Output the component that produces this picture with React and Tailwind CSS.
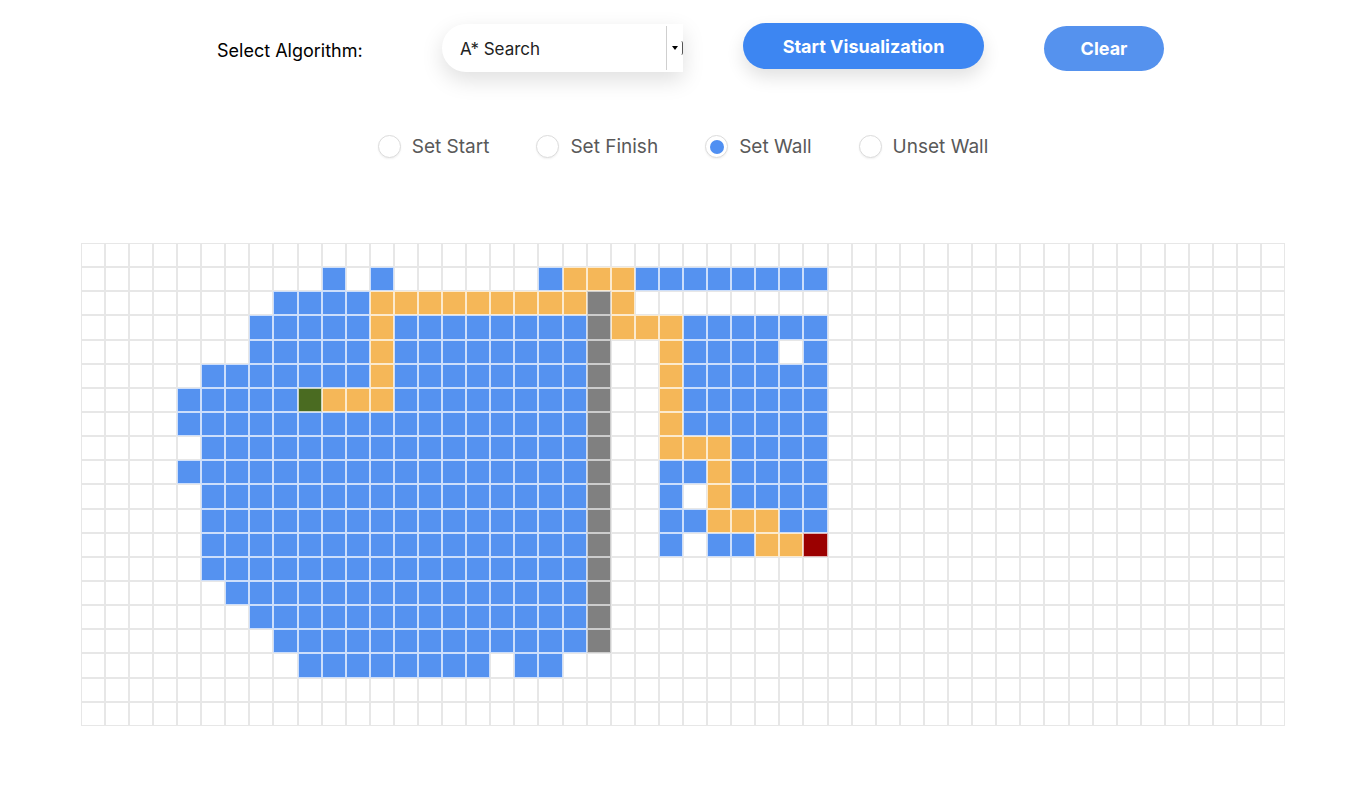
import React, { useState } from "react";

const ROWS = 20;
const COLS = 50;

// row -> list of [type, from, to]
const PAINT = {
  1: [["B", 10, 10], ["B", 12, 12], ["B", 19, 19], ["O", 20, 22], ["B", 23, 30]],
  2: [["B", 8, 11], ["O", 12, 20], ["W", 21, 21], ["O", 22, 22]],
  3: [["B", 7, 11], ["O", 12, 12], ["B", 13, 20], ["W", 21, 21], ["O", 22, 24], ["B", 25, 30]],
  4: [["B", 7, 11], ["O", 12, 12], ["B", 13, 20], ["W", 21, 21], ["O", 24, 24], ["B", 25, 28], ["B", 30, 30]],
  5: [["B", 5, 11], ["O", 12, 12], ["B", 13, 20], ["W", 21, 21], ["O", 24, 24], ["B", 25, 30]],
  6: [["B", 4, 8], ["S", 9, 9], ["O", 10, 12], ["B", 13, 20], ["W", 21, 21], ["O", 24, 24], ["B", 25, 30]],
  7: [["B", 4, 20], ["W", 21, 21], ["O", 24, 24], ["B", 25, 30]],
  8: [["B", 5, 20], ["W", 21, 21], ["O", 24, 26], ["B", 27, 30]],
  9: [["B", 4, 20], ["W", 21, 21], ["B", 24, 25], ["O", 26, 26], ["B", 27, 30]],
  10: [["B", 5, 20], ["W", 21, 21], ["B", 24, 24], ["O", 26, 26], ["B", 27, 30]],
  11: [["B", 5, 20], ["W", 21, 21], ["B", 24, 25], ["O", 26, 28], ["B", 29, 30]],
  12: [["B", 5, 20], ["W", 21, 21], ["B", 24, 24], ["B", 26, 27], ["O", 28, 29], ["F", 30, 30]],
  13: [["B", 5, 20], ["W", 21, 21]],
  14: [["B", 6, 20], ["W", 21, 21]],
  15: [["B", 7, 20], ["W", 21, 21]],
  16: [["B", 8, 20], ["W", 21, 21]],
  17: [["B", 9, 16], ["B", 18, 19]],
};

const CELL_CLASS = {
  E: "bg-white border-[#e7e7e7]",
  B: "bg-[#5592f0] border-white/70",
  O: "bg-[#f5b758] border-white/70",
  W: "bg-[#808080] border-white/60",
  S: "bg-[#4a6b21] border-white/70",
  F: "bg-[#9b0000] border-white/70",
};

const buildGrid = () => {
  const grid = [];
  for (let r = 0; r < ROWS; r++) {
    const row = new Array(COLS).fill("E");
    (PAINT[r] || []).forEach(([type, from, to]) => {
      for (let c = from; c <= to; c++) row[c] = type;
    });
    grid.push(row);
  }
  return grid;
};

const MODES = ["Set Start", "Set Finish", "Set Wall", "Unset Wall"];

const Radio = ({ label, checked, onSelect }) => (
  <label
    onClick={onSelect}
    className="flex cursor-pointer items-center gap-[11px]"
  >
    <span className="flex h-[23px] w-[23px] items-center justify-center rounded-full border border-[#dcdcdc] bg-white shadow-[0_1px_2px_rgba(0,0,0,0.06)]">
      {checked && <span className="h-[14px] w-[14px] rounded-full bg-[#4f8ff2]" />}
    </span>
    <span className="text-[19px] leading-none text-[#595959]">{label}</span>
  </label>
);

const App = () => {
  const [mode, setMode] = useState("Set Wall");
  const grid = buildGrid();

  return (
    <div className="min-h-screen bg-white font-['Inter','Liberation_Sans',sans-serif]">
      <div className="flex items-center justify-center pl-[15px] pt-[24px]">
        <span className="mt-[4px] w-[150px] whitespace-nowrap text-[18px] text-black">
          Select Algorithm:
        </span>

        <div className="ml-[75px] flex h-[48px] w-[241px] items-center rounded-l-full bg-white shadow-[0_8px_22px_rgba(0,0,0,0.13)]">
          <span className="flex-1 pl-[18px] pt-[3px] text-[17px] text-[#222]">A* Search</span>
          <div className="flex h-[44px] w-[17px] items-center border-l border-[#cfcfcf] pl-[5px]">
            <span className="h-0 w-0 border-x-[3px] border-t-[4px] border-x-transparent border-t-black" />
            <span className="ml-[3px] h-[14px] w-[3px] rounded-r-full border-r border-[#555]" />
          </div>
        </div>

        <button className="-mt-[4px] ml-[60px] h-[46px] w-[241px] rounded-full bg-[#3d86f2] text-[18px] font-bold text-white shadow-[0_8px_18px_rgba(0,0,0,0.12)]">
          Start Visualization
        </button>

        <button className="ml-[60px] mt-[1px] h-[45px] w-[120px] rounded-full bg-[#5592ee] text-[18px] font-bold text-white">
          Clear
        </button>
      </div>

      <div className="mt-[63px] flex items-center justify-center gap-[47px]">
        {MODES.map((m) => (
          <Radio key={m} label={m} checked={mode === m} onSelect={() => setMode(m)} />
        ))}
      </div>

      <div className="mt-[85px] flex justify-center">
        <div className="grid grid-cols-[repeat(50,24.1px)]">
          {grid.map((row, r) =>
            row.map((type, c) => (
              <div
                key={`${r}-${c}`}
                className={`h-[24.15px] border ${CELL_CLASS[type]}`}
              />
            ))
          )}
        </div>
      </div>
    </div>
  );
};

export default App;
